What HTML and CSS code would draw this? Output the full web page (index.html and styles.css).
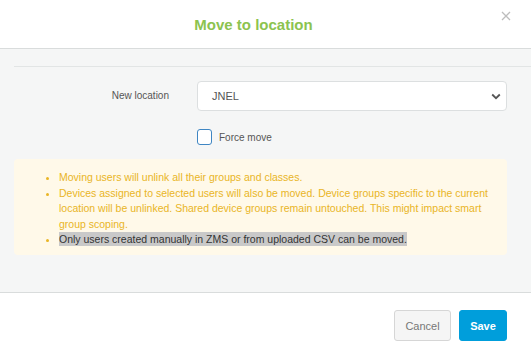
FILE: index.html
```html
<!DOCTYPE html>
<html>
<head>
<meta charset="utf-8">
<link rel="stylesheet" href="styles.css">
</head>
<body>
<div class="modal">
  <header class="modal-header">
    <h1 class="modal-title">Move to location</h1>
    <button class="close" aria-label="Close">
      <svg width="10" height="10" viewBox="0 0 10 10"><path d="M1 1L9 9M9 1L1 9" stroke="#bdbdbd" stroke-width="1.3" fill="none"/></svg>
    </button>
  </header>
  <main class="modal-body">
    <div class="divider"></div>
    <div class="form-row">
      <label class="form-label">New location</label>
      <div class="select">
        <span class="select-value">JNEL</span>
        <svg class="chevron" width="10" height="7" viewBox="0 0 10 7"><path d="M1.2 1.5L5 5.2L8.8 1.5" stroke="#555" stroke-width="1.8" fill="none"/></svg>
      </div>
    </div>
    <div class="check-row">
      <span class="checkbox"></span>
      <span class="check-label">Force move</span>
    </div>
    <div class="warning">
      <ul>
        <li>Moving users will unlink all their groups and classes.</li>
        <li>Devices assigned to selected users will also be moved. Device groups specific to the current location will be unlinked. Shared device groups remain untouched. This might impact smart group scoping.</li>
        <li><span class="selected">Only users created manually in ZMS or from uploaded CSV can be moved.</span></li>
      </ul>
    </div>
  </main>
  <footer class="modal-footer">
    <button class="btn btn-default">Cancel</button>
    <button class="btn btn-primary">Save</button>
  </footer>
</div>
</body>
</html>
```
FILE: styles.css
```css
* { box-sizing: border-box; }
html, body { margin: 0; padding: 0; }
body {
  width: 531px;
  height: 355px;
  background: #fff;
  font-family: "Liberation Sans", Arial, sans-serif;
  overflow: hidden;
}
.modal { display: flex; flex-direction: column; height: 355px; }
.modal-header {
  height: 49px;
  border-bottom: 1px solid #d9dcdc;
  display: flex;
  align-items: center;
  justify-content: center;
  position: relative;
  padding-right: 24px;
}
.modal-title {
  margin: 0;
  font-size: 15px;
  font-weight: bold;
  color: #8cc34f;
}
.close {
  position: absolute;
  right: 20px;
  top: 11px;
  border: 0;
  background: none;
  padding: 0;
  width: 10px;
  height: 10px;
  display: flex;
}
.modal-body {
  background: #f5f6f6;
  height: 244px;
  padding: 0 24px 0 14px;
  border-bottom: 1px solid #d9dcdc;
}
.divider {
  height: 18px;
  border-bottom: 1px solid #e2e5e5;
  margin-right: -24px;
}
.form-row {
  display: flex;
  align-items: flex-start;
  margin-top: 14px;
}
.form-label {
  width: 155px;
  text-align: right;
  font-size: 10px;
  color: #555;
  padding-top: 9px;
}
.select {
  margin-left: 28px;
  flex: 1;
  height: 30px;
  background: #fff;
  border: 1px solid #dcdfe0;
  border-radius: 4px;
  display: flex;
  align-items: center;
  justify-content: space-between;
  padding: 0 5px 0 14px;
}
.select-value { font-size: 11px; color: #555; }
.check-row {
  display: flex;
  align-items: center;
  margin: 18px 0 0 183px;
  height: 16px;
}
.checkbox {
  width: 15px;
  height: 16px;
  border: 1.5px solid #3f86c3;
  border-radius: 3px;
  background: #fff;
}
.check-label { font-size: 10px; color: #555; margin-left: 7px; }
.warning {
  margin-top: 14px;
  background: #fff9e9;
  border-radius: 4px;
  padding: 11px 10px 8px 34px;
  height: 96px;
  width: 493px;
}
.warning ul {
  margin: 0;
  padding-left: 11px;
  color: #e9b526;
  font-size: 10.5px;
  line-height: 15.5px;
}
.selected { background: #c9c9c9; color: #333; padding: 1px 0; }
.modal-footer {
  flex: 1;
  display: flex;
  justify-content: flex-end;
  align-items: flex-start;
  padding: 17px 24px 0 0;
  gap: 8px;
}
.btn {
  height: 31px;
  border-radius: 3px;
  font-family: inherit;
  font-size: 11px;
  padding: 0;
}
.btn-default {
  width: 57px;
  background: #f5f5f5;
  border: 1px solid #d6d6d6;
  color: #777;
}
.btn-primary {
  width: 48px;
  background: #009edb;
  border: 1px solid #009edb;
  color: #fff;
  font-weight: bold;
}
```
